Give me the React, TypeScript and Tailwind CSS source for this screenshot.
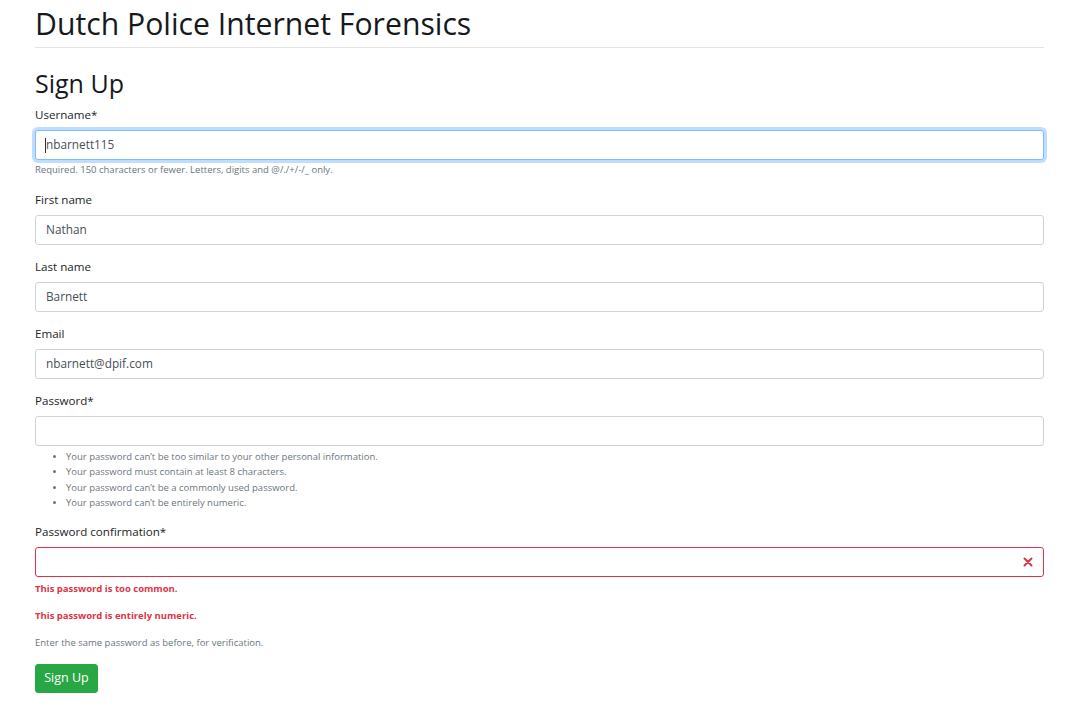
const font = { fontFamily: '"Open Sans", "Noto Sans", sans-serif' };

function Field({
  label,
  value,
  focused,
  children,
}: {
  label: string;
  value?: string;
  focused?: boolean;
  children?: React.ReactNode;
}) {
  return (
    <div className="mb-[12px]">
      <div className="text-[11.6px] leading-[19px] text-[#212529] mb-[6px]">{label}</div>
      <div
        className={
          "h-[30px] rounded-[3px] border bg-white px-[10px] flex items-center text-[11.8px] text-[#495057] " +
          (focused
            ? "border-[#80bdff] shadow-[0_0_0_3px_rgba(0,123,255,0.25)]"
            : "border-[#ced4da]")
        }
      >
        {focused && <span className="w-px h-[15px] bg-[#333] -ml-px" />}
        {value}
      </div>
      {children}
    </div>
  );
}

export default function App() {
  return (
    <div className="min-h-screen bg-white" style={font}>
      <div className="ml-[35px] w-[1009px] pt-[5px]">
        <div className="border-b border-[#e5e5e5] pb-[5px]">
          <h1 className="text-[30.2px] leading-[37px] text-[#16191c]">
            Dutch Police Internet Forensics
          </h1>
        </div>
        <h2 className="mt-[20px] mb-[7px] text-[25px] leading-[30px] text-[#16191c]">
          Sign Up
        </h2>

        <Field label="Username*" value="nbarnett115" focused>
          <div className="mt-[2px] text-[9.5px] leading-[15px] text-[#6c757d]">
            Required. 150 characters or fewer. Letters, digits and @/./+/-/_ only.
          </div>
          <div className="h-[1px]" />
        </Field>

        <Field label="First name" value="Nathan" />
        <Field label="Last name" value="Barnett" />
        <Field label="Email" value="nbarnett@dpif.com" />

        <Field label="Password*">
          <ul className="mt-[3px] pl-[31px] list-disc text-[9.5px] leading-[15.3px] text-[#6c757d] marker:text-[8px]">
            <li>Your password can’t be too similar to your other personal information.</li>
            <li>Your password must contain at least 8 characters.</li>
            <li>Your password can’t be a commonly used password.</li>
            <li>Your password can’t be entirely numeric.</li>
          </ul>
        </Field>

        <div className="mt-[9px] text-[11.6px] leading-[19px] text-[#212529] mb-[6px]">
          Password confirmation*
        </div>
        <div className="h-[30px] rounded-[3px] border border-[#dc3545] bg-white flex items-center justify-end pr-[10px]">
          <svg width="10" height="10" viewBox="0 0 10 10">
            <path d="M1.5 1.5 L8.5 8.5 M8.5 1.5 L1.5 8.5" stroke="#dc3545" strokeWidth="2" strokeLinecap="round" />
          </svg>
        </div>
        <div className="mt-[4px] text-[9.5px] leading-[15px] font-bold text-[#dc3545]">
          This password is too common.
        </div>
        <div className="mt-[12px] text-[9.5px] leading-[15px] font-bold text-[#dc3545]">
          This password is entirely numeric.
        </div>
        <div className="mt-[12px] text-[9.5px] leading-[15px] text-[#6c757d]">
          Enter the same password as before, for verification.
        </div>
        <button className="mt-[14px] h-[29px] w-[63px] rounded-[3px] bg-[#28a745] text-white text-[12.5px] border border-[#28a745]">
          Sign Up
        </button>
      </div>
    </div>
  );
}
